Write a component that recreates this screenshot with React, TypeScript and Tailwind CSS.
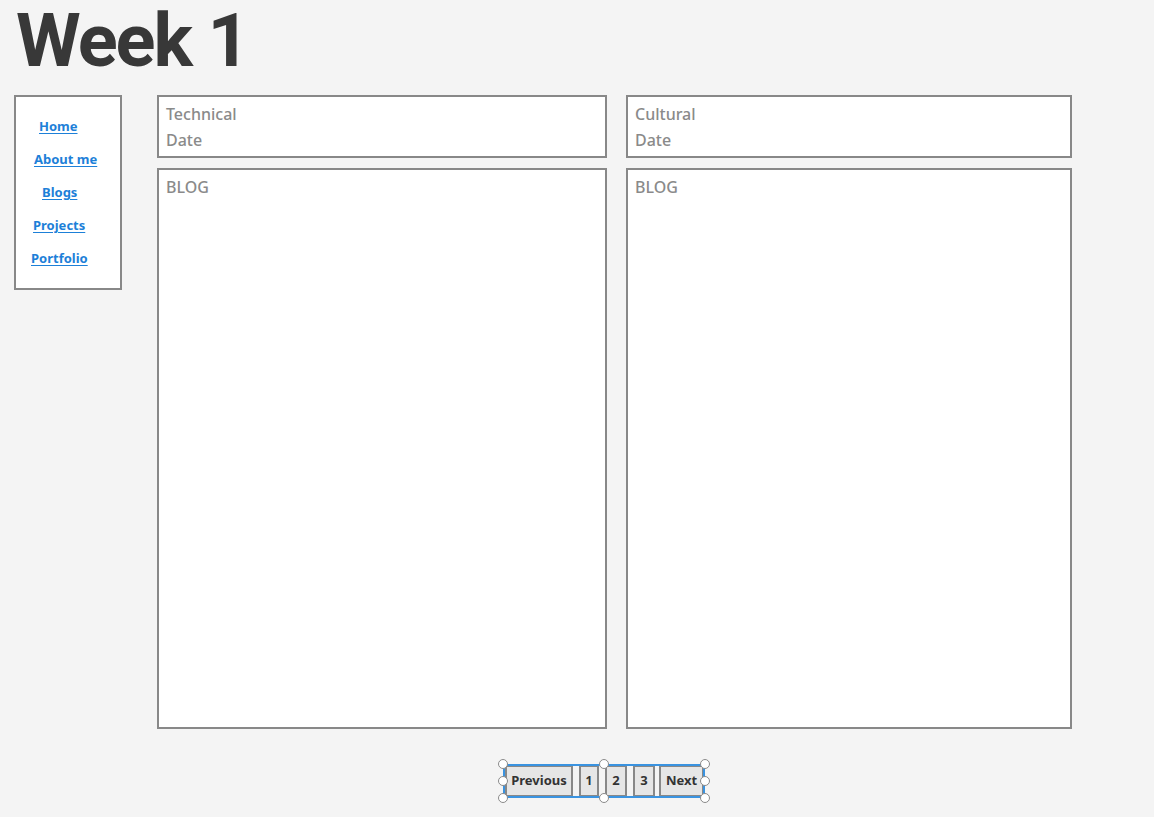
import React from 'react';

const links = [
  { label: 'Home', ml: 'ml-[23px]' },
  { label: 'About me', ml: 'ml-[18px]' },
  { label: 'Blogs', ml: 'ml-[26px]' },
  { label: 'Projects', ml: 'ml-[17px]' },
  { label: 'Portfolio', ml: 'ml-[15px]' },
];

function Handle({ pos }: { pos: string }) {
  return <span className={`absolute w-[10px] h-[10px] rounded-full bg-white border border-[#8a8a8a] ${pos}`} />;
}

function BlogColumn({ title, width }: { title: string; width: string }) {
  return (
    <div className={`flex flex-col gap-[10px] ${width}`}>
      <div className="h-[63px] border-2 border-[#888] bg-white px-[7px] pt-[4px] text-[16px] leading-[26px] font-medium text-[#8a8a8a]">
        <div>{title}</div>
        <div>Date</div>
      </div>
      <div className="h-[561px] border-2 border-[#888] bg-white px-[7px] pt-[4px] text-[16px] leading-[26px] font-medium text-[#8a8a8a]">
        BLOG
      </div>
    </div>
  );
}

export default function App() {
  return (
    <div className="min-h-screen bg-[#f4f4f4] px-[14px] font-['Noto_Sans',sans-serif]">
      <h1 className="font-['Roboto',sans-serif] text-[74px] leading-[82px] font-bold tracking-[-2px] text-[#383838] pl-[2px] mb-[13px] whitespace-nowrap">
        Week 1
      </h1>

      <div className="flex items-start">
        {/* Side nav */}
        <nav className="w-[108px] h-[195px] border-2 border-[#888] bg-white pt-[13px] flex flex-col">
          {links.map(l => (
            <a
              key={l.label}
              href="#"
              className={`${l.ml} text-[13px] leading-[33px] font-bold text-[#1d80d8] underline underline-offset-2 self-start`}
            >
              {l.label}
            </a>
          ))}
        </nav>

        <div className="ml-[35px] flex gap-[19px]">
          <BlogColumn title="Technical" width="w-[450px]" />
          <BlogColumn title="Cultural" width="w-[446px]" />
        </div>
      </div>

      {/* Pagination */}
      <div className="mt-[36px] ml-[491px] flex">
        <div className="relative flex gap-[6px] text-[13px] font-bold text-[#333]">
          <button className="w-[68px] h-[32px] border-2 border-[#888] bg-[#e6e6e6]">Previous</button>
          <button className="w-[20px] h-[32px] border-2 border-[#888] bg-[#e6e6e6] text-[12px]">1</button>
          <button className="w-[22px] h-[32px] border-2 border-[#888] bg-[#e6e6e6]">2</button>
          <button className="w-[22px] h-[32px] border-2 border-[#888] bg-[#e6e6e6]">3</button>
          <button className="w-[45px] h-[32px] -ml-[2px] border-2 border-[#888] bg-[#e6e6e6]">Next</button>

          {/* selection overlay */}
          <div className="absolute -top-[1px] -bottom-[1px] -left-[2px] -right-[1px] border-2 border-[#3a93e0] pointer-events-none" />
          <Handle pos="-top-[6px] -left-[7px]" />
          <Handle pos="-top-[6px] left-[94px]" />
          <Handle pos="-top-[6px] -right-[6px]" />
          <Handle pos="top-[11px] -left-[7px]" />
          <Handle pos="top-[11px] -right-[6px]" />
          <Handle pos="-bottom-[6px] -left-[7px]" />
          <Handle pos="-bottom-[6px] left-[94px]" />
          <Handle pos="-bottom-[6px] -right-[6px]" />
        </div>
      </div>
    </div>
  );
}
